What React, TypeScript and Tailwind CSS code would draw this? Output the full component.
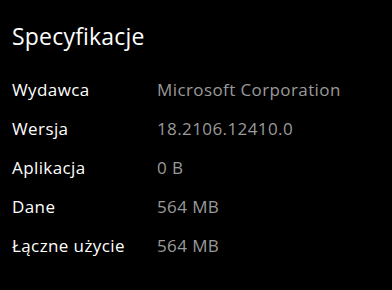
export default function App() {
  const rows: [string, string][] = [
    ["Wydawca", "Microsoft Corporation"],
    ["Wersja", "18.2106.12410.0"],
    ["Aplikacja", "0 B"],
    ["Dane", "564 MB"],
    ["Łączne użycie", "564 MB"],
  ];
  return (
    <div
      className="w-[392px] h-[290px] bg-black text-white overflow-hidden"
      style={{ fontFamily: '"Open Sans", "Noto Sans", sans-serif' }}
    >
      <div className="pl-[12px] pt-[20px] text-[23px] leading-[32px] tracking-[0.2px] text-white">Specyfikacje</div>
      <div className="mt-[18px] pl-[12px]">
        {rows.map(([k, v]) => (
          <div key={k} className="flex h-[39px] items-center text-[17px] leading-[39px] tracking-[0.4px]">
            <div className="w-[145px] text-white">{k}</div>
            <div className="text-[#9a9a9a]">{v}</div>
          </div>
        ))}
      </div>
    </div>
  );
}
